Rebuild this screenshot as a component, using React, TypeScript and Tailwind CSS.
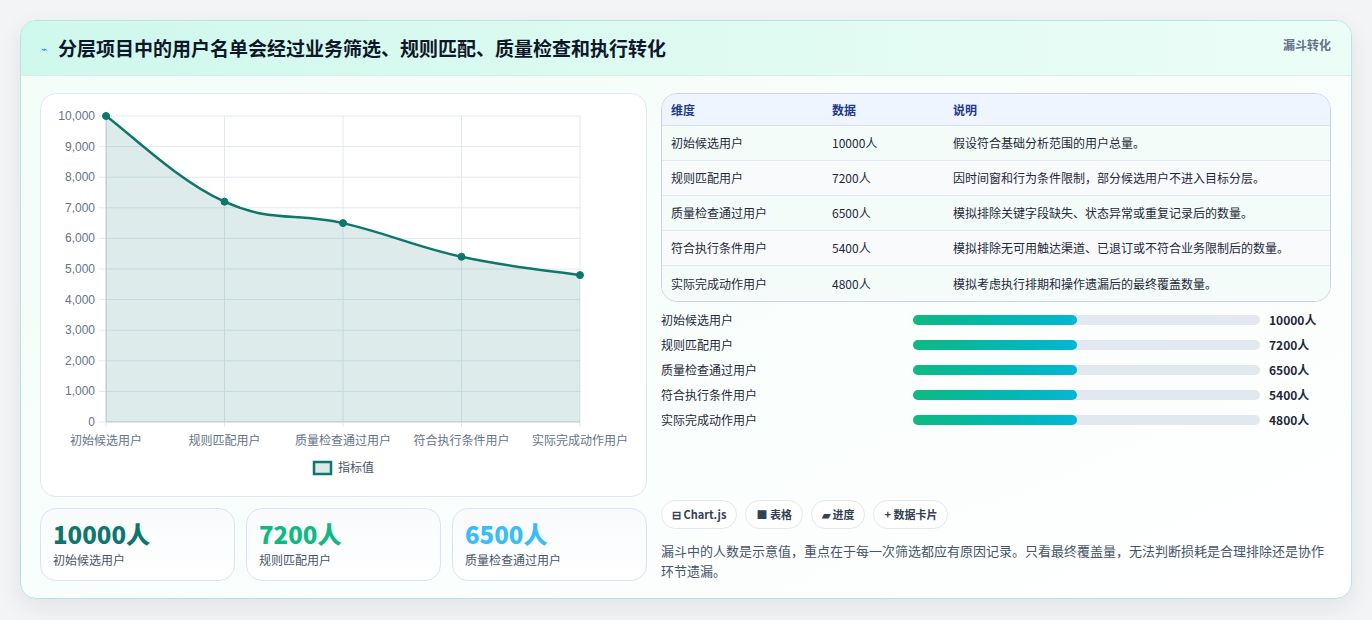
import React from "react";

const rows = [
  ["初始候选用户", "10000人", "假设符合基础分析范围的用户总量。"],
  ["规则匹配用户", "7200人", "因时间窗和行为条件限制，部分候选用户不进入目标分层。"],
  ["质量检查通过用户", "6500人", "模拟排除关键字段缺失、状态异常或重复记录后的数量。"],
  ["符合执行条件用户", "5400人", "模拟排除无可用触达渠道、已退订或不符合业务限制后的数量。"],
  ["实际完成动作用户", "4800人", "模拟考虑执行排期和操作遗漏后的最终覆盖数量。"],
];
const vals = [10000, 7200, 6500, 5400, 4800];
const xs = [65, 183.5, 302, 420.5, 539];
const Y = (v: number) => 328 - (v / 10000) * 306;

function curve() {
  const p = vals.map((v, i) => [xs[i], Y(v)]);
  let d = `M${p[0][0]},${p[0][1]}`;
  for (let i = 0; i < p.length - 1; i++) {
    const p0 = p[i - 1] || p[i];
    const p1 = p[i];
    const p2 = p[i + 1];
    const p3 = p[i + 2] || p2;
    const t = 0.2;
    const c1 = [p1[0] + (p2[0] - p0[0]) * t, p1[1] + (p2[1] - p0[1]) * t];
    const c2 = [p2[0] - (p3[0] - p1[0]) * t, p2[1] - (p3[1] - p1[1]) * t];
    d += ` C${c1[0]},${c1[1]} ${c2[0]},${c2[1]} ${p2[0]},${p2[1]}`;
  }
  return d;
}

function Chart() {
  const d = curve();
  const font = "'Liberation Sans', 'Noto Sans CJK SC', sans-serif";
  return (
    <svg width="605" height="400" style={{ fontFamily: font }}>
      {[0, 1, 2, 3, 4, 5, 6, 7, 8, 9, 10].map((i) => {
        const y = 328 - i * 30.6;
        return (
          <g key={i}>
            <line x1={58} x2={539} y1={y} y2={y} stroke="#e2e8f0" />
            <text x={54} y={y + 4} fontSize="12" fill="#64748b" textAnchor="end">
              {(i * 1000).toLocaleString("en-US")}
            </text>
          </g>
        );
      })}
      {xs.map((x, i) => (
        <g key={i}>
          <line x1={x} x2={x} y1={22} y2={333} stroke="#e2e8f0" />
          <text x={x} y={351} fontSize="12" fill="#64748b" textAnchor="middle">
            {rows[i][0]}
          </text>
        </g>
      ))}
      <line x1={65} x2={539} y1={328} y2={328} stroke="#cbd5e1" />
      <line x1={65} x2={65} y1={22} y2={328} stroke="#cbd5e1" />
      <path d={`${d} L539,328 L65,328 Z`} fill="rgba(15,118,110,0.14)" />
      <path d={d} fill="none" stroke="#0f766e" strokeWidth="2.5" />
      {vals.map((v, i) => (
        <circle key={i} cx={xs[i]} cy={Y(v)} r="3.5" fill="#0f766e" stroke="#0f766e" />
      ))}
      <rect x={273} y={368} width={17} height={12} fill="#dbe9e7" stroke="#0f766e" strokeWidth="2.5" />
      <text x={297} y={378} fontSize="12" fill="#475569">指标值</text>
    </svg>
  );
}

export default function App() {
  return (
    <div className="min-h-[620px] bg-[#f3f4f6] px-5 pt-5" style={{ fontFamily: "'Noto Sans CJK SC', 'Noto Sans', sans-serif" }}>
      <div className="rounded-2xl border border-[#b6e6e0] bg-gradient-to-br from-[#f2fdf8] to-white shadow-[0_8px_24px_rgba(15,23,42,0.08)] overflow-hidden h-[579px]">
        <div className="h-[55px] flex items-center justify-between pl-[20px] pr-5 bg-gradient-to-r from-[#cff8ec] to-[#ecfdf7] border-b border-[#d5efe9]">
          <div className="flex items-center gap-[10px]">
            <span className="text-[11px] text-[#3b82f6]">⌁</span>
            <h1 className="text-[19px] font-bold text-[#0f172a]">分层项目中的用户名单会经过业务筛选、规则匹配、质量检查和执行转化</h1>
          </div>
          <span className="text-[12px] font-bold text-[#64748b] self-start mt-[15px]">漏斗转化</span>
        </div>
        <div className="flex gap-[14px] pl-[19px] pr-5 pt-[17px]">
          <div className="w-[607px] flex flex-col gap-[11px]">
            <div className="h-[404px] rounded-2xl border border-[#e2e8f0] bg-white">
              <Chart />
            </div>
            <div className="grid grid-cols-3 gap-[11px]">
              {[
                ["10000人", "初始候选用户", "text-[#0f766e]"],
                ["7200人", "规则匹配用户", "text-[#10b981]"],
                ["6500人", "质量检查通过用户", "text-[#38bdf8]"],
              ].map(([v, l, c]) => (
                <div key={l} className="h-[73px] rounded-2xl border border-[#dbe4f0] bg-gradient-to-b from-[#f8fafc] to-white px-[12px] pt-[10px]">
                  <div className={`text-[24px] font-extrabold leading-[30px] ${c}`}>{v}</div>
                  <div className="text-[12px] text-[#475569] mt-[2px]">{l}</div>
                </div>
              ))}
            </div>
          </div>
          <div className="flex-1 flex flex-col">
            <div className="rounded-2xl border border-[#cbd5e1] overflow-hidden text-[12px] text-[#1e293b]">
              <div className="flex h-[32px] items-center bg-[#eef5ff] border-b border-[#d6e0ec] font-bold text-[#1e3a8a]">
                <div className="w-[170px] shrink-0 pl-[9px]">维度</div>
                <div className="w-[121px] shrink-0">数据</div>
                <div>说明</div>
              </div>
              {rows.map((r, i) => (
                <div key={i} className={`flex h-[35px] items-center ${i % 2 ? "bg-[#f8fafc]" : "bg-[#f3fcf8]"} ${i < 4 ? "border-b border-[#e2e8f0]" : ""}`}>
                  <div className="w-[170px] shrink-0 pl-[9px]">{r[0]}</div>
                  <div className="w-[121px] shrink-0">{r[1]}</div>
                  <div>{r[2]}</div>
                </div>
              ))}
            </div>
            <div className="flex flex-col gap-[9px] mt-[10px] text-[12px] text-[#1e293b]">
              {rows.map((r) => (
                <div key={r[0]} className="flex items-center h-[16px]">
                  <div className="w-[252px]">{r[0]}</div>
                  <div className="w-[347px] h-[10px] rounded-full bg-[#e2e8f0]">
                    <div className="w-[164px] h-full rounded-full bg-gradient-to-r from-[#10b981] to-[#06b6d4]" />
                  </div>
                  <div className="ml-[9px] font-bold">{r[1]}</div>
                </div>
              ))}
            </div>
            <div className="flex gap-[8px] mt-[72px] text-[11px] font-bold text-[#334155]">
              {["⊟ Chart.js", "■ 表格", "▰ 进度", "+ 数据卡片"].map((c) => (
                <span key={c} className="h-[29px] px-[10px] flex items-center rounded-full border border-[#e2e8f0] bg-white">{c}</span>
              ))}
            </div>
            <p className="mt-[12px] text-[13px] leading-[20px] text-[#475569]">
              漏斗中的人数是示意值，重点在于每一次筛选都应有原因记录。只看最终覆盖量，无法判断损耗是合理排除还是协作环节遗漏。
            </p>
          </div>
        </div>
      </div>
    </div>
  );
}
